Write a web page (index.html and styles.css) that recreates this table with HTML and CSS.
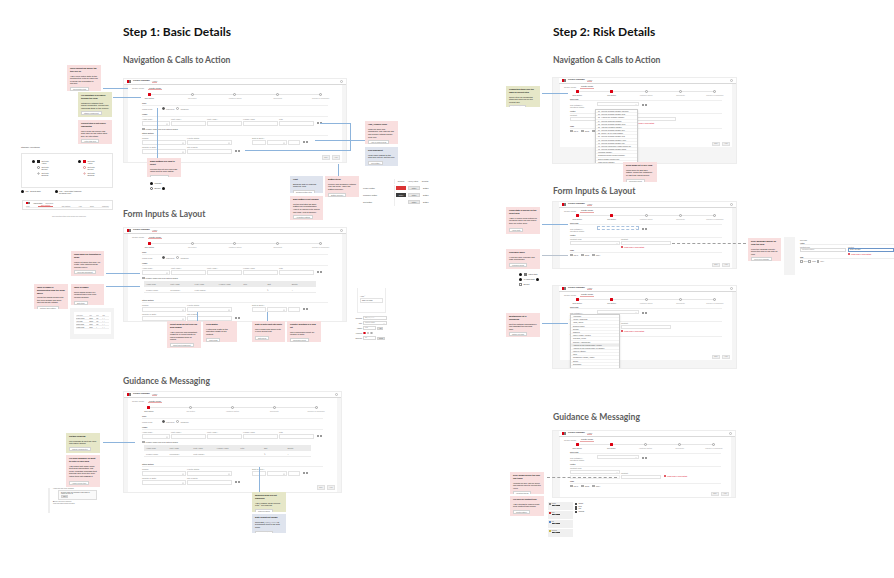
FILE: index.html
```html
<!DOCTYPE html>
<html lang="en">
<head>
<meta charset="utf-8">
<title>Profile Manager – UX review board</title>
<link rel="stylesheet" href="styles.css">
</head>
<body>
<div class="canvas">

  <!-- ===== Titles ===== -->
  <h1 class="t1 t1a">Step 1: Basic Details</h1>
  <h1 class="t1 t1b">Step 2: Risk Details</h1>
  <h2 class="t2 t2a">Navigation &amp; Calls to Action</h2>
  <h2 class="t2 t2b">Form Inputs &amp; Layout</h2>
  <h2 class="t2 t2c">Guidance &amp; Messaging</h2>
  <h2 class="t2 t2d">Navigation &amp; Calls to Action</h2>
  <h2 class="t2 t2e">Form Inputs &amp; Layout</h2>
  <h2 class="t2 t2f">Guidance &amp; Messaging</h2>

  <!-- ===== Step 1 frame: navigation ===== -->
  <div class="frame pf1">
    <div class="appbar"><i class="logo"><b></b><b></b></i><span class="appname">Profile Manager</span><span class="apptab">Home</span><i class="gear"></i></div>
    <div class="panel">
      <div class="tabs"><span>Search Profile</span><span class="on">Create Profile</span></div>
      <div class="stepper">
        <div class="step on"><i></i><span>Basic Details</span></div>
        <div class="step"><i></i><span>Risk Details</span></div>
        <div class="step"><i></i><span>Additional Details</span></div>
        <div class="step"><i></i><span>Documents</span></div>
        <div class="step"><i></i><span>Summary &amp; Submission</span></div>
      </div>
      <div class="form">
        <div class="sec">Type</div>
        <div class="row rad"><span class="w18">Profile Type</span><i class="rb on"></i><span>Individual</span><i class="rb"></i><span>Company</span></div>
        <div class="sec">Name</div>
        <div class="row">
          <div class="fld w28"><span>Name Type *</span><i class="inp sel"></i></div>
          <div class="fld w35"><span>Last Name *</span><i class="inp"></i></div>
          <div class="fld w35"><span>First Name *</span><i class="inp"></i></div>
          <div class="fld w35"><span>Middle Name</span><i class="inp"></i></div>
          <div class="fld w35"><span>Title</span><i class="inp"></i></div>
          <span class="ico"><i></i><i></i></span>
        </div>
        <div class="row chk"><i class="cb"></i><span>Primary name and alias details added</span></div>
        <div class="sec">Other details</div>
        <div class="row">
          <div class="fld w44"><span>Gender</span><i class="inp sel"></i></div>
          <div class="fld w45"><span>Marital Status</span><i class="inp sel"></i></div>
          <div class="fld w14 gapl"><span>Date of Birth *</span><i class="inp"></i></div>
          <div class="fld w20"><span>&#160;</span><i class="inp sel"></i></div>
          <div class="fld w12"><span>&#160;</span><i class="inp"></i></div>
          <span class="ico"><i></i><i></i></span>
        </div>
        <div class="row">
          <div class="fld w44"><span>Country of Birth</span><i class="inp sel"></i></div>
          <div class="fld w45"><span>City of Birth</span><i class="inp"></i></div>
          <span class="ico"><i></i><i></i></span>
        </div>
      </div>
      <div class="actions"><span class="btn">Back</span><span class="btn">Next</span></div>
    </div>
  </div>

  <!-- ===== Step 1 frame: form inputs ===== -->
  <div class="frame pf2">
    <div class="appbar"><i class="logo"><b></b><b></b></i><span class="appname">Profile Manager</span><span class="apptab">Home</span><i class="gear"></i></div>
    <div class="panel">
      <div class="tabs"><span>Search Profile</span><span class="on">Create Profile</span></div>
      <div class="stepper">
        <div class="step on"><i></i><span>Basic Details</span></div>
        <div class="step"><i></i><span>Risk Details</span></div>
        <div class="step"><i></i><span>Additional Details</span></div>
        <div class="step"><i></i><span>Documents</span></div>
        <div class="step"><i></i><span>Summary &amp; Submission</span></div>
      </div>
      <div class="form">
        <div class="sec">Type</div>
        <div class="row rad"><span class="w18">Profile Type</span><i class="rb on"></i><span>Individual</span><i class="rb"></i><span>Company</span></div>
        <div class="sec">Name</div>
        <div class="row">
          <div class="fld w28"><span>Name Type *</span><i class="inp sel"></i></div>
          <div class="fld w35"><span>Last Name *</span><i class="inp"></i></div>
          <div class="fld w35"><span>First Name *</span><i class="inp"></i></div>
          <div class="fld w35"><span>Middle Name</span><i class="inp"></i></div>
          <div class="fld w35"><span>Title</span><i class="inp"></i></div>
          <span class="ico"><i></i><i></i></span>
        </div>
        <div class="row chk"><i class="cb"></i><span>Primary name and alias details added</span></div>
        <div class="tbl">
          <div class="tr th"><span>Name Type</span><span>Last Name</span><span>First Name</span><span>Middle Name</span><span>Title</span><span>Edit</span><span>Delete</span></div>
          <div class="tr"><span>Primary name</span><span>Surname01</span><span>FirstName01</span><span></span><span></span><span>&#9998;</span><span>&#215;</span></div>
        </div>
        <div class="sec sp">Other details</div>
        <div class="row">
          <div class="fld w44"><span>Gender</span><i class="inp sel"></i></div>
          <div class="fld w45"><span>Marital Status</span><i class="inp sel"></i></div>
          <div class="fld w14 gapl"><span>Date of Birth *</span><i class="inp"></i></div>
          <div class="fld w20"><span>&#160;</span><i class="inp sel"></i></div>
          <div class="fld w12"><span>&#160;</span><i class="inp"></i></div>
          <span class="ico"><i></i><i></i></span>
        </div>
        <div class="row">
          <div class="fld w44"><span>Country of Birth</span><i class="inp sel"></i></div>
          <div class="fld w45"><span>City of Birth</span><i class="inp"></i></div>
          <span class="ico"><i></i><i></i></span>
        </div>
      </div>
    </div>
  </div>

  <!-- ===== Step 1 frame: guidance ===== -->
  <div class="frame pf3">
    <div class="appbar"><i class="logo"><b></b><b></b></i><span class="appname">Profile Manager</span><span class="apptab">Home</span><i class="gear"></i></div>
    <div class="panel">
      <div class="tabs"><span>Search Profile</span><span class="on">Create Profile</span></div>
      <div class="stepper">
        <div class="step on"><i></i><span>Basic Details</span></div>
        <div class="step"><i></i><span>Risk Details</span></div>
        <div class="step"><i></i><span>Additional Details</span></div>
        <div class="step"><i></i><span>Documents</span></div>
        <div class="step"><i></i><span>Summary &amp; Submission</span></div>
      </div>
      <div class="form">
        <div class="sec">Type</div>
        <div class="row rad"><span class="w18">Profile Type</span><i class="rb on"></i><span>Individual</span><i class="rb"></i><span>Company</span></div>
        <div class="sec">Name</div>
        <div class="row">
          <div class="fld w28"><span>Name Type *</span><i class="inp sel"></i></div>
          <div class="fld w35"><span>Last Name *</span><i class="inp"></i></div>
          <div class="fld w35"><span>First Name *</span><i class="inp"></i></div>
          <div class="fld w35"><span>Middle Name</span><i class="inp"></i></div>
          <div class="fld w35"><span>Title</span><i class="inp"></i></div>
          <span class="ico"><i></i><i></i></span>
        </div>
        <div class="row chk"><i class="cb"></i><span>Primary name and alias details added</span></div>
        <div class="tbl">
          <div class="tr th"><span>Name Type</span><span>Last Name</span><span>First Name</span><span>Middle Name</span><span>Title</span><span>Edit</span><span>Delete</span></div>
          <div class="tr"><span>Primary name</span><span>Surname01</span><span>FirstName01</span><span></span><span></span><span>&#9998;</span><span>&#215;</span></div>
        </div>
        <div class="sec sp">Other details</div>
        <div class="row">
          <div class="fld w44"><span>Gender</span><i class="inp sel"></i></div>
          <div class="fld w45"><span>Marital Status</span><i class="inp sel"></i></div>
          <div class="fld w14 gapl"><span>Date of Birth *</span><i class="inp"></i></div>
          <div class="fld w20"><span>&#160;</span><i class="inp sel"></i></div>
          <div class="fld w12"><span>&#160;</span><i class="inp"></i></div>
          <span class="ico"><i></i><i></i></span>
        </div>
        <div class="row">
          <div class="fld w44"><span>Country of Birth</span><i class="inp sel"></i></div>
          <div class="fld w45"><span>City of Birth</span><i class="inp"></i></div>
          <span class="ico"><i></i><i></i></span>
        </div>
      </div>
      <div class="actions"><span class="btn">Back</span><span class="btn">Next</span></div>
    </div>
  </div>

  <!-- ===== Step 2 frames ===== -->
  <div class="frame rf pr1">
    <div class="appbar"><i class="logo"><b></b><b></b></i><span class="appname">Profile Manager</span><span class="apptab">Home</span><i class="gear"></i></div>
    <div class="panel">
      <div class="tabs"><span>Search Profile</span><span class="on">Create Profile</span></div>
      <div class="stepper">
        <div class="step on"><i></i><span>Basic Details</span></div>
        <div class="step on"><i></i><span>Risk Details</span></div>
        <div class="step"><i></i><span>Additional Details</span></div>
        <div class="step"><i></i><span>Documents</span></div>
        <div class="step"><i></i><span>Summary &amp; Submission</span></div>
      </div>
      <div class="form">
        <div class="sec">Risk class</div>
        <div class="row"><span class="w26">Risk category *</span><i class="inp sel w42"></i><span class="ico"><i></i><i></i></span></div>
        <div class="row lone"><span>Collateral status</span></div>
        <div class="sec">Notes</div>
        <div class="fld w106"><span>Contact</span><i class="inp"></i></div>
        <div class="err e1">Please enter a valid contact</div>
        <div class="sec">Tags</div>
        <div class="row tags"><i class="cb"></i><span>2019</span><i class="cb"></i><span>2020</span><i class="cb"></i><span>2021</span></div>
      </div>
      <div class="actions"><span class="btn">Back</span><span class="btn">Next</span></div>
    </div>
    <div class="tail"></div>
    <div class="dd dd1">
      <span>01 - Low Risk Customer Category Individual</span>
      <span>02 - Low Risk Customer Category Joint</span>
      <span>03 - Medium Risk Customer Category</span>
      <span>04 - Low Risk Corporate Category</span>
      <span>05 - Low Risk Customer Category Trust</span>
      <span>06 - High Risk Customer Category</span>
      <span>07 - Low Risk Customer Category Sole</span>
      <span>08 - Charity Not-for-Profit Category</span>
      <span>09 - Low Risk Customer Category Club</span>
      <span>10 - Low Risk Customer Category Minor</span>
      <span>11 - Low Risk Customer Category PEP</span>
      <span>12 - Low Risk Partnership Multiple Owners List</span>
      <span>13 - Low Risk Customer Category Estate</span>
      <span>Prohibited Category</span>
      <span>Sanctioned Country Related Customer</span>
      <span>Special Category Related Party</span>
      <span>Under Review Category</span>
    </div>
  </div>

  <div class="frame rf pr2">
    <div class="appbar"><i class="logo"><b></b><b></b></i><span class="appname">Profile Manager</span><span class="apptab">Home</span><i class="gear"></i></div>
    <div class="panel">
      <div class="tabs"><span>Search Profile</span><span class="on">Create Profile</span></div>
      <div class="stepper">
        <div class="step on"><i></i><span>Basic Details</span></div>
        <div class="step on"><i></i><span>Risk Details</span></div>
        <div class="step"><i></i><span>Additional Details</span></div>
        <div class="step"><i></i><span>Documents</span></div>
        <div class="step"><i></i><span>Summary &amp; Submission</span></div>
      </div>
      <div class="form">
        <div class="sec">Risk class</div>
        <div class="row"><span class="w26">Risk category *</span><i class="inp sel w42 focus"></i><span class="ico"><i></i><i></i></span></div>
        <div class="row lone"><span>Collateral status</span></div>
        <div class="sec">Notes</div>
        <div class="row">
          <div class="fld w50"><span>Contact Type</span><i class="inp sel"></i></div>
          <div class="fld w50"><span>Contact</span><i class="inp"></i></div>
        </div>
        <div class="err e2"><i class="ei"></i>Please enter a valid contact</div>
        <div class="sec">Tags</div>
        <div class="row tags"><i class="cb"></i><span>2019</span><i class="cb"></i><span>2020</span><i class="cb"></i><span>2021</span></div>
      </div>
      <div class="actions"><span class="btn">Back</span><span class="btn">Next</span></div>
    </div>
  </div>

  <div class="frame rf pr3">
    <div class="appbar"><i class="logo"><b></b><b></b></i><span class="appname">Profile Manager</span><span class="apptab">Home</span><i class="gear"></i></div>
    <div class="panel">
      <div class="tabs"><span>Search Profile</span><span class="on">Create Profile</span></div>
      <div class="stepper">
        <div class="step on"><i></i><span>Basic Details</span></div>
        <div class="step on"><i></i><span>Risk Details</span></div>
        <div class="step"><i></i><span>Additional Details</span></div>
        <div class="step"><i></i><span>Documents</span></div>
        <div class="step"><i></i><span>Summary &amp; Submission</span></div>
      </div>
      <div class="form">
        <div class="sec">Risk class</div>
        <div class="row"><span class="w26">Risk category *</span><i class="inp sel w42"></i><span class="ico"><i></i><i></i></span></div>
        <div class="row lone"><span>Collateral status</span></div>
        <div class="sec">Notes</div>
        <div class="row">
          <div class="fld w50"><span>Contact Type</span><i class="inp sel"></i></div>
          <div class="fld w50"><span>Contact</span><i class="inp"></i></div>
        </div>
        <div class="err e2"><i class="ei"></i>Please enter a valid contact</div>
        <div class="sec">Tags</div>
        <div class="row tags"><i class="cb"></i><span>2019</span><i class="cb"></i><span>2020</span><i class="cb"></i><span>2021</span></div>
      </div>
      <div class="actions"><span class="btn">Back</span><span class="btn">Next</span></div>
    </div>
    <div class="dd dd2">
      <span>Accountant</span>
      <span>Adviser / Consultant</span>
      <span>Agent / Broker</span>
      <span>Business Partner</span>
      <span>Director</span>
      <span>Employee</span>
      <span>Family Member / Relative</span>
      <span>Guarantor / Surety</span>
      <span>Executor / Administrator</span>
      <span class="hl">Nominee for the account holder / trustee</span>
      <span>Nominee for the account holder, co-signatory</span>
      <span>Power of Attorney</span>
      <span>Other</span>
      <span>Relationship Manager / Officer</span>
      <span>Spouse</span>
      <span>Shareholder</span>
    </div>
  </div>

  <div class="frame rf pr4">
    <div class="appbar"><i class="logo"><b></b><b></b></i><span class="appname">Profile Manager</span><span class="apptab">Home</span><i class="gear"></i></div>
    <div class="panel">
      <div class="tabs"><span>Search Profile</span><span class="on">Create Profile</span></div>
      <div class="stepper">
        <div class="step on"><i></i><span>Basic Details</span></div>
        <div class="step on"><i></i><span>Risk Details</span></div>
        <div class="step"><i></i><span>Additional Details</span></div>
        <div class="step"><i></i><span>Documents</span></div>
        <div class="step"><i></i><span>Summary &amp; Submission</span></div>
      </div>
      <div class="form">
        <div class="sec">Risk class</div>
        <div class="row"><span class="w26">Risk category *</span><i class="inp sel w42"></i><span class="ico"><i></i><i></i></span></div>
        <div class="row lone"><span>Collateral status</span></div>
        <div class="sec">Notes</div>
        <div class="row">
          <div class="fld w50"><span>Contact Type</span><i class="inp sel"></i><i class="inp hint"></i></div>
          <div class="fld w40"><span>Contact</span><i class="inp"></i></div>
          <span class="err e3"><i class="ei"></i>Please enter a valid contact</span>
        </div>
        <div class="sec">Tags</div>
        <div class="row tags"><i class="cb"></i><span>2019</span><i class="cb"></i><span>2020</span><i class="cb"></i><span>2021</span></div>
      </div>
      <div class="actions"><span class="btn">Back</span><span class="btn">Next</span></div>
    </div>
  </div>

  <!-- ===== Annotation notes ===== -->
  <div class="note pink n1"><b>Users cannot see which tab they are on</b><p>Add a clear active state to the selected tab, with an underline in brand red so position is obvious.</p><span class="nb">Tab selected state</span></div>
  <div class="note olive n2"><b>No indication of progress through the form</b><p>Introduce a stepper that shows completed, current and upcoming steps of the journey.</p><span class="nb">Stepper component</span></div>
  <div class="note pink n3"><b>Current step is not clearly highlighted</b><p>Use a filled red marker and bold label for the active step; grey for later steps.</p><span class="nb">Active step style</span></div>
  <div class="note pink n4"><b>Radio buttons are hard to select</b><p>Increase the hit area and align labels next to each option.</p><span class="nb">Radio component</span></div>
  <div class="note pink n5"><b>Add / remove icons</b><p>Icons are small and ambiguous. Use labelled add and remove actions beside each row.</p><span class="nb">Add or remove fields</span></div>
  <div class="note blue n6"><b>Icon placement</b><p>Keep icons aligned to the field they act on, not the row.</p><span class="nb">Icon button &#8250;</span></div>
  <div class="note blue n7"><b>Next</b><p>Disabled until all required fields are valid.</p><span class="nb">Disabled button state</span></div>
  <div class="note pink n8"><b>Button styles</b><p>Primary and secondary actions look the same. Apply the button hierarchy.</p><span class="nb">Button hierarchy</span></div>
  <div class="note pink n9"><b>Back button is not needed</b><p>On the first step the Back button has no destination. Hide it or replace with Cancel and keep Next as primary.</p><span class="nb">Navigation buttons</span></div>

  <div class="note pink n10"><b>Long labels are truncated in fields</b><p>Labels sit above the field, full width, with required fields marked clearly.</p><span class="nb">Field label placement</span></div>
  <div class="note pink n11"><b>Table of names is disconnected from the fields above</b><p>Group the added names with the form section and show edit and delete actions.</p><span class="nb">Editable table pattern</span></div>
  <div class="note pink n12"><b>Table of names</b><p>Show added names in a compact table with clear column headers.</p><span class="nb">Data table</span></div>
  <div class="note pink n13"><b>Select fields do not look like drop-downs</b><p>Add a chevron and consistent height to all select inputs so users recognise them as menus.</p><span class="nb">Select input component</span></div>
  <div class="note pink n14"><b>Field widths</b><p>Match field width to the expected length of the content.</p><span class="nb">Input sizing</span></div>
  <div class="note pink n15"><b>Date of birth split into parts</b><p>Use a single date picker with a clear format hint.</p><span class="nb">Date picker</span></div>
  <div class="note pink n16"><b>Country selection is a long list</b><p>Use a searchable select for country of birth.</p><span class="nb">Searchable select</span></div>

  <div class="note olive n17"><b>Section headings</b><p>Use headings to split the form into logical groups.</p><span class="nb">Section heading style</span></div>
  <div class="note pink n18"><b>No inline guidance on what to enter in each field</b><p>Add helper text under fields that need explanation, and inline validation messages that describe how to fix the error rather than just flagging it.</p><span class="nb">Helper &amp; error text</span></div>
  <div class="note olive n19"><b>Required fields are not explained</b><p>Add a legend: fields marked with * are required.</p><span class="nb">Required legend</span></div>
  <div class="note blue n20"><b>Date format not shown</b><p>Show DD / MM / YYYY as placeholder text in the date fields.</p><span class="nb">Placeholder text</span></div>

  <div class="note olive n21"><b>Completed steps look the same as current step</b><p>Show a tick for completed steps and keep red for the current one.</p><span class="nb">Stepper states</span></div>
  <div class="note pink n22"><b>Drop-down list is very long</b><p>Users scroll to find their option. Group the categories or add type-ahead search.</p><span class="nb">Searchable select</span></div>
  <div class="note pink n23"><b>Focus state is unclear on the select field</b><p>Apply a visible focus outline so keyboard users can see where they are in the form.</p><span class="nb">Focus state</span></div>
  <div class="note pink n24"><b>Checkbox labels</b><p>Make the label clickable and align checkboxes.</p><span class="nb">Checkbox group</span></div>
  <div class="note pink n25"><b>Error messages appear far from the field</b><p>Place the message directly below the field in red with an icon.</p><span class="nb">Inline error message</span></div>
  <div class="note pink n26"><b>Relationship list is unordered</b><p>Sort the options alphabetically and highlight the hovered item.</p><span class="nb">Option list order</span></div>
  <div class="note pink n27"><b>Error shown before the user has typed</b><p>Validate on blur, not on focus, and explain how to correct the value.</p><span class="nb">Validation timing</span></div>
  <div class="note pink n28"><b>No help for contact type</b><p>Add a tooltip to explain what each contact type means.</p><span class="nb">Tooltip pattern</span></div>

  <!-- ===== Connectors ===== -->
  <i class="ln c1"></i><i class="ln c2"></i><i class="ln c3"></i><i class="ln c4"></i>
  <i class="ln c5"></i><i class="ln c6"></i><i class="ln c7"></i><i class="ln c8"></i>
  <i class="ln c9"></i><i class="ln c10"></i><i class="ln c11"></i><i class="ln c12"></i>
  <i class="ln c13"></i><i class="ln c14"></i><i class="ln c15"></i><i class="ln c16"></i>
  <i class="ln c17"></i><i class="ln c18"></i><i class="ln dash c19"></i><i class="ln dash c20"></i>

  <!-- ===== Component widgets ===== -->
  <div class="wlabel w-sv">Stepper variations</div>
  <div class="wbox w-svbox">
    <div class="vstep">
      <div class="vs"><i class="mk"></i><i class="sq"></i><span>Text Title<br>Active</span></div>
      <div class="vs"><i class="ci"></i><span>Text Title<br>Default</span></div>
      <div class="vs"><i class="ci sm"></i><span>Text Title<br>Disabled</span></div>
    </div>
    <div class="vstep red">
      <div class="vs"><i class="mk"></i><i class="sq"></i><span>Text Title<br>Active</span></div>
      <div class="vs"><i class="ci"></i><span>Text Title<br>Default</span></div>
      <div class="vs"><i class="ci sm"></i><span>Text Title<br>Disabled</span></div>
    </div>
  </div>
  <div class="legend w-lg">
    <span><i class="mk"></i>Link - Default state</span>
    <span><i class="mk"></i>Link - Hover state (underline<br>on mouse over)</span>
  </div>
  <div class="minibar w-mb">
    <div class="mbtop"><i class="logo"><b></b><b></b></i><span class="appname">Application</span><span>Document</span></div>
    <div class="mbtabs"><span>Type</span><span class="on">Basic Details</span><span>Risk Details</span><span>Add</span><span>Docs</span><span>Summary</span></div>
  </div>
  <div class="caption w-cap">Tab selected state with brand red underline</div>

  <div class="btable w-bt">
    <div class="btrow bthd"><span class="btl"></span><span>Enabled</span><span>Hover/Active</span><span>Selected</span></div>
    <div class="btrow"><span class="btl">Primary button</span><span class="bb red"></span><span class="bb gr">Button</span><span class="bt">Button</span></div>
    <div class="btrow"><span class="btl">Secondary button</span><span class="bb dk">Button</span><span class="bb gr">Button</span><span class="bt">Button</span></div>
    <div class="btrow"><span class="btl">Text button</span><span class="bb none"></span><span class="bb gr">Button</span><span class="bt">Button</span></div>
  </div>

  <div class="dotbox w-k">
    <div class="ktable">
      <div class="kr kh"><span>Name Type</span><span>Last</span><span>First</span><span>Edit</span></div>
      <div class="kr"><span>Primary name</span><span>Smith</span><span>Ann</span><span>&#9998; &#215;</span></div>
      <div class="kr"><span>Alias name</span><span>Smyth</span><span>Ann</span><span>&#9998; &#215;</span></div>
      <div class="kr"><span>Former name</span><span>Jones</span><span>Ann</span><span>&#9998; &#215;</span></div>
      <div class="kr"><span>Maiden name</span><span>Jones</span><span>A.</span><span>&#9998; &#215;</span></div>
    </div>
  </div>

  <div class="card w-p"><span>Name *</span><i class="inp pinp">Enter full name</i></div>
  <div class="formspec w-q">
    <div class="fs"><span>Start date</span><i class="inp">DD/MM/YYYY</i></div>
    <div class="fs"><span>Type</span><i class="inp sel">Select an option</i></div>
    <div class="fs"><span>Amount</span><i class="inp short">0.00</i><i class="gbtn">Add</i></div>
    <div class="fs"><span>Preferred</span><i class="rb on"></i><i class="rb"></i><i class="rb"></i></div>
    <div class="fs"><span>Reference</span><i class="inp short">Ref</i><i class="gbtn">Search</i></div>
  </div>

  <div class="guide w-g">
    <span class="gl">Helper text and inline validation</span>
    <div class="gbox"><span>&#9632; Please enter the customer's legal name as shown on their ID.</span><i class="gbtn">Got it</i></div>
    <span class="gl"><b>&#9632;</b> Error: this field is required</span>
    <span class="gl">Field hint shown below the input</span>
  </div>

  <div class="legend w-r2l">
    <span><i class="mk"></i><i class="sqg"></i>Active state</span>
    <span><i class="mk"></i>&#8594; Focus state<i class="mk"></i></span>
    <span><i class="cbx"></i>Default</span>
  </div>

  <div class="spec w-r2d">
    <div class="spin">
      <span class="sh">Risk class</span>
      <span class="sh2">Notes</span>
      <div class="srow"><div class="sf"><span>Contact Type</span><i class="inp">Telephone number</i></div><div class="sf"><span>Contact</span><i class="inp blu">01234 567 890</i></div></div>
      <span class="serr"><i class="ei"></i>Please enter a valid contact</span>
      <span class="sh2">Tags</span>
      <div class="stags"><i class="cb"></i>2019 <i class="cb"></i>2020 <i class="cb"></i>2021</div>
    </div>
  </div>

  <div class="cards w-r4">
    <div class="mc"><i class="mi"></i><div><span>Tooltip</span><i class="dbtn">OK</i></div></div>
    <div class="mc"><i class="mi r"></i><div><span>Error</span><i class="dbtn">OK</i></div></div>
    <div class="mc"><i class="mi b"></i><div><span>Info</span><i class="dbtn">OK</i></div></div>
    <div class="mc"><i class="mi y"></i><div><span>Warning</span><i class="dbtn">OK</i></div></div>
  </div>
  <div class="legend w-r4l">
    <span><i class="mk"></i>Tooltip</span>
    <span><i class="mk"></i>Error</span>
    <span><i class="mk"></i>Info</span>
    <span><i class="mk"></i>Warning</span>
  </div>
  <div class="legend w-f1l">
    <span><i class="mk"></i>Selected</span>
    <span><i class="ring"></i>Default<i class="mk"></i></span>
  </div>

</div>
</body>
</html>
```

FILE: styles.css
```css
* { box-sizing: border-box; margin: 0; padding: 0; }
html, body { background: #ffffff; }
body { margin: 0; font-family: Lato, "Liberation Sans", sans-serif; color: #222; }
i, em { font-style: normal; }

.canvas { position: relative; width: 894px; height: 578px; overflow: hidden; background: #fff; }

/* ---------- titles ---------- */
.t1 { position: absolute; font-size: 12px; font-weight: 700; line-height: 1; color: #111; white-space: nowrap; }
.t2 { position: absolute; font-size: 8.6px; font-weight: 700; line-height: 1; color: #5d5d5d; white-space: nowrap; }
.t1a { left: 123px; top: 26px; }
.t1b { left: 553px; top: 26px; }
.t2a { left: 123px; top: 55.5px; }
.t2b { left: 123px; top: 209.5px; }
.t2c { left: 123px; top: 376.5px; }
.t2d { left: 553px; top: 55.5px; }
.t2e { left: 553px; top: 186.5px; }
.t2f { left: 553px; top: 412.5px; }

/* ---------- mock frames ---------- */
.frame {
  position: absolute; background: #f5f5f5; border: 1px solid #ededed; overflow: hidden;
  display: flex; flex-direction: column; font-size: 2px; line-height: 1.2; color: #8a8a8a; white-space: nowrap;
}
.pf1 { left: 123px; top: 78px; width: 224px; height: 85px; }
.pf2 { left: 123px; top: 227px; width: 224px; height: 95px; }
.pf3 { left: 123px; top: 391px; width: 219px; height: 102px; }
.pr1 { left: 552px; top: 77px; width: 185px; height: 87px; }
.pr2 { left: 552px; top: 201px; width: 185px; height: 68px; }
.pr3 { left: 552px; top: 285px; width: 185px; height: 84px; }
.pr4 { left: 552px; top: 430px; width: 184px; height: 68px; }

.appbar {
  flex: none; height: 6px; background: #fff; border-bottom: 1px solid #d9d9d9;
  display: flex; align-items: center; gap: 2px; padding: 0 3px;
}
.logo { display: flex; width: 4px; height: 2.4px; flex: none; gap: 0.4px; }
.logo b { flex: 1; background: #db0011; }
.logo b + b { background: #7a7a7a; }
.appname { font-weight: 700; color: #333; font-size: 2.4px; }
.apptab { color: #777; border-bottom: 1px solid #eab0b0; }
.gear { margin-left: auto; width: 3.5px; height: 3.5px; border: 1px solid #bdbdbd; border-radius: 50%; }

.panel { flex: 1; margin: 0 4px; background: #fff; display: flex; flex-direction: column; padding: 1px 0 2px; min-height: 0; }
.tabs { flex: none; display: flex; gap: 3px; padding-left: 3px; height: 5px; align-items: center; color: #8d8d8d; }
.tabs span { padding: 0 1px; }
.tabs .on { color: #444; border-bottom: 1px solid #eaa9a9; }

.stepper { flex: none; display: flex; margin: 2px 0 2px; }
.step { flex: 1; position: relative; display: flex; flex-direction: column; align-items: center; gap: 1px; font-size: 1.7px; color: #a8a8a8; }
.step::before { content: ""; position: absolute; top: 1px; left: 50%; width: 100%; height: 1px; background: #e6e6e6; }
.step:last-child::before { display: none; }
.step i { position: relative; width: 3px; height: 3px; border: 1px solid #a6a6a6; background: #f3f3f3; border-radius: 50%; }
.step.on i { background: #db0011; border-color: #db0011; border-radius: 0.5px; }
.step.on span { color: #666; }

.form { display: flex; flex-direction: column; gap: 1px; padding: 0 14px 0 14px; }
.sec { font-weight: 700; color: #555; border-bottom: 1px solid #efefef; padding-bottom: 0.5px; margin-top: 1px; }
.sec.sp { margin-top: 5px; }
.row { display: flex; align-items: flex-end; gap: 1px; }
.row.rad { align-items: center; gap: 1.5px; height: 4px; }
.row.lone { height: 3px; align-items: center; }
.fld { display: flex; flex-direction: column; gap: 0.5px; flex: none; }
.inp { display: block; height: 5px; border: 1px solid #e3e3e3; background: #fff; position: relative; font-size: 1.6px; color: #999; line-height: 3px; padding-left: 1px; overflow: hidden; }
.sel::after { content: ""; position: absolute; right: 1.5px; top: 1px; width: 1px; height: 1px; border-right: 1px solid #c4c4c4; border-bottom: 1px solid #c4c4c4; transform: rotate(45deg) scale(0.6); }
.focus { border: 1px dashed #a9c2df; }
.hint { border-color: #eeeeee; height: 3.5px; }
.ico { display: flex; gap: 1px; margin-left: 2px; align-self: center; margin-top: 2px; }
.ico i { width: 2px; height: 2px; border-radius: 50%; background: #777; }
.rb { width: 3px; height: 3px; border: 1px solid #aaa; border-radius: 50%; flex: none; }
.rb.on { background: #555; border-color: #555; }
.cb { width: 2.5px; height: 2.5px; border: 1px solid #aaa; flex: none; }
.row.chk { align-items: center; gap: 1px; color: #555; margin-top: 1px; }
.row.tags { align-items: center; gap: 1px; color: #666; margin-top: 1px; }
.row.tags span { margin-right: 2px; }

.w12 { width: 12px; } .w14 { width: 14px; } .w18 { width: 18px; } .w20 { width: 20px; }
.w26 { width: 26px; flex: none; } .w28 { width: 28px; } .w35 { width: 35px; } .w40 { width: 40px; }
.w42 { width: 42px; flex: none; } .w44 { width: 44px; } .w45 { width: 45px; } .w50 { width: 50px; }
.w106 { width: 106px; }
.gapl { margin-left: 19px; }

.tbl { margin: 1px 12px 0 2px; }
.tr { display: flex; height: 5px; align-items: center; padding-left: 2px; }
.tr span { flex: 1; }
.th { background: #ebebeb; color: #777; height: 6px; }
.tr + .tr { border-bottom: 1px solid #ececec; height: 6px; }

.err { color: #d23; font-size: 1.7px; display: flex; align-items: center; gap: 1px; }
.e1 { margin-left: 64px; }
.e2 { margin-left: 51px; }
.e3 { align-self: flex-end; margin-left: 2px; margin-bottom: 2px; }
.ei { width: 2px; height: 2px; border-radius: 50%; background: #d23; }

.actions { margin-top: auto; display: flex; justify-content: flex-end; gap: 2px; padding-right: 2px; flex: none; }
.btn { width: 8px; height: 5px; border: 1px solid #e0e0e0; background: #f1f1f1; font-size: 1.6px; color: #9a9a9a; display: flex; align-items: center; justify-content: center; }

/* step 2 frame variations */
.rf .appbar { margin-left: 6px; }
.rf .panel { margin: 0 4px 0 7px; padding-bottom: 1.5px; }
.rf .tabs { height: 4px; }
.rf .stepper { margin: 1px 0 1px; }
.rf .form { padding: 0 10px 0 10px; gap: 0.5px; }
.rf .sec { margin-top: 0.5px; }
.rf .inp { height: 4px; }
.rf .row.lone { height: 2.5px; }
.rf .row.tags { margin-top: 0.5px; }
.rf .btn { height: 4px; }
.pr1 .panel { flex: none; height: 63px; }
.pr1 .tail { flex: 1; }
.pr3 .panel { flex: none; height: 68px; }

.dd { position: absolute; background: #fff; border: 1px solid #cdcdcd; display: flex; flex-direction: column; font-size: 1.6px; color: #555; overflow: hidden; box-shadow: 0 1px 2px rgba(0,0,0,0.12); }
.dd span { height: 3.2px; line-height: 3.2px; padding-left: 2px; border-bottom: 1px solid #f3f3f3; overflow: hidden; }
.dd .hl { background: #ececec; }
.dd1 { left: 42px; top: 31px; width: 43px; height: 56px; }
.dd2 { left: 17px; top: 28px; width: 50px; height: 56px; }

/* ---------- notes ---------- */
.note {
  position: absolute; padding: 2px 3px 2px; display: flex; flex-direction: column; gap: 2px;
  font-size: 2.1px; line-height: 1.25; color: #333; overflow: hidden;
}
.note b { font-weight: 700; color: #111; font-size: 2.2px; }
.note p { color: #2a2a2a; }
.note .nb { align-self: flex-start; margin-top: auto; background: #fff; border: 1px solid #d3d3d3; padding: 0 2px; font-size: 1.7px; color: #777; white-space: nowrap; }
.pink { background: #f9dfdf; }
.olive { background: #e6e7c8; }
.blue { background: #dfe4ee; }

.n1 { left: 67px; top: 65px; width: 34px; height: 26px; }
.n2 { left: 78px; top: 92px; width: 34px; height: 25px; }
.n3 { left: 78px; top: 120px; width: 34px; height: 24px; }
.n4 { left: 147px; top: 158px; width: 34px; height: 19px; }
.n5 { left: 365px; top: 121px; width: 33px; height: 23px; }
.n6 { left: 365px; top: 147px; width: 33px; height: 19px; }
.n7 { left: 290px; top: 176px; width: 33px; height: 17px; }
.n8 { left: 325px; top: 176px; width: 34px; height: 21px; }
.n9 { left: 290px; top: 196px; width: 33px; height: 24px; }
.n10 { left: 71px; top: 251px; width: 33px; height: 25px; }
.n11 { left: 34px; top: 284px; width: 34px; height: 25px; }
.n12 { left: 71px; top: 284px; width: 33px; height: 21px; }
.n13 { left: 167px; top: 321px; width: 34px; height: 27px; }
.n14 { left: 203px; top: 321px; width: 34px; height: 21px; }
.n15 { left: 252px; top: 321px; width: 33px; height: 21px; }
.n16 { left: 287px; top: 321px; width: 34px; height: 21px; }
.n17 { left: 66px; top: 433px; width: 34px; height: 20px; }
.n18 { left: 66px; top: 455px; width: 34px; height: 32px; }
.n19 { left: 252px; top: 492px; width: 34px; height: 20px; }
.n20 { left: 252px; top: 514px; width: 34px; height: 19px; }
.n21 { left: 506px; top: 86px; width: 34px; height: 21px; }
.n22 { left: 623px; top: 162px; width: 34px; height: 20px; }
.n23 { left: 506px; top: 207px; width: 34px; height: 27px; }
.n24 { left: 506px; top: 249px; width: 34px; height: 20px; }
.n25 { left: 748px; top: 238px; width: 33px; height: 23px; }
.n26 { left: 506px; top: 313px; width: 34px; height: 24px; }
.n27 { left: 510px; top: 472px; width: 34px; height: 22px; }
.n28 { left: 510px; top: 496px; width: 34px; height: 20px; }

/* ---------- connectors ---------- */
.ln { position: absolute; background: #8db4dc; }
.ln.dash { background: none; border-top: 1px dashed #a0a0a0; }
.c1 { left: 103px; top: 88px; width: 25px; height: 1px; }
.c2 { left: 113px; top: 97px; width: 28px; height: 1px; }
.c3 { left: 157px; top: 108px; width: 1px; height: 50px; }
.c4 { left: 315px; top: 140px; width: 50px; height: 1px; }
.c5 { left: 320px; top: 123px; width: 31px; height: 1px; }
.c6 { left: 350px; top: 123px; width: 1px; height: 28px; }
.c7 { left: 245px; top: 150px; width: 106px; height: 1px; }
.c8 { left: 338px; top: 164px; width: 1px; height: 12px; }
.c9 { left: 106px; top: 273px; width: 34px; height: 1px; }
.c10 { left: 106px; top: 286px; width: 34px; height: 1px; }
.c11 { left: 197px; top: 312px; width: 1px; height: 9px; }
.c12 { left: 267px; top: 312px; width: 1px; height: 9px; }
.c13 { left: 103px; top: 442px; width: 32px; height: 1px; }
.c14 { left: 259px; top: 467px; width: 1px; height: 25px; }
.c15 { left: 542px; top: 93px; width: 26px; height: 1px; }
.c16 { left: 542px; top: 224px; width: 26px; height: 1px; }
.c17 { left: 542px; top: 255px; width: 26px; height: 1px; background: #b9c3cf; }
.c18 { left: 542px; top: 323px; width: 26px; height: 1px; }
.c19 { left: 672px; top: 243px; width: 74px; height: 0; }
.c20 { left: 547px; top: 477px; width: 70px; height: 0; }

/* ---------- widgets ---------- */
.wlabel { position: absolute; font-size: 2.4px; color: #555; white-space: nowrap; }
.w-sv { left: 21px; top: 146px; }
.wbox { position: absolute; border: 1px solid #e6e6e6; background: #fff; display: flex; gap: 20px; padding: 6px 0 0 10px; }
.w-svbox { left: 21px; top: 153px; width: 92px; height: 35px; }
.vstep { display: flex; flex-direction: column; gap: 2px; width: 26px; font-size: 1.8px; color: #555; line-height: 1.15; }
.vs { display: flex; align-items: flex-start; gap: 1.5px; position: relative; padding-left: 5px; }
.vs .mk { position: absolute; left: 0; top: 0; }
.vs .sq { width: 3px; height: 3px; background: #222; flex: none; }
.vstep.red .sq { background: #db0011; }
.vs .ci { width: 3px; height: 3px; border: 1px solid #888; border-radius: 50%; flex: none; }
.vstep.red .ci { border-color: #d88; }
.vs .ci.sm { transform: scale(0.7); }
.mk { display: inline-block; width: 3px; height: 3px; border-radius: 50%; background: #111; flex: none; }
.ring { display: inline-block; width: 3px; height: 3px; border-radius: 50%; border: 1px solid #555; flex: none; }

.legend { position: absolute; display: flex; font-size: 1.8px; color: #444; line-height: 1.2; white-space: nowrap; }
.legend span { display: flex; align-items: flex-start; gap: 1.5px; }
.w-lg { left: 21px; top: 190px; gap: 14px; }
.w-r2l { left: 519px; top: 273px; flex-direction: column; gap: 2px; }
.w-r4l { left: 575px; top: 503px; flex-direction: column; gap: 0.6px; font-size: 1.5px; }
.w-r4l .mk { width: 2px; height: 2px; }
.w-f1l { left: 150px; top: 182px; flex-direction: column; gap: 2px; }
.sqg { width: 3px; height: 3px; background: #777; }
.cbx { width: 3px; height: 3px; border: 1px solid #888; }

.minibar { position: absolute; background: #fff; border: 1px solid #e3e3e3; display: flex; flex-direction: column; font-size: 1.7px; color: #888; padding: 1px 3px; }
.w-mb { left: 22px; top: 200px; width: 91px; height: 10px; }
.mbtop { display: flex; align-items: center; gap: 3px; height: 4px; }
.mbtop .appname { font-size: 1.9px; font-weight: 400; color: #555; }
.mbtabs { display: flex; justify-content: space-between; height: 4px; align-items: center; border-bottom: 1px solid #eee; }
.mbtabs .on { border-bottom: 1px solid #e06b6b; color: #d55; padding: 0 3px; }
.caption { position: absolute; font-size: 1.8px; color: #999; white-space: nowrap; }
.w-cap { left: 52px; top: 215px; }

.btable { position: absolute; display: flex; flex-direction: column; gap: 3px; font-size: 1.8px; color: #555; }
.w-bt { left: 363px; top: 179px; width: 72px; }
.btrow { display: flex; align-items: center; height: 4px; }
.btrow > span { flex: none; }
.btl { width: 32px; border-right: 1px solid #eee; height: 7px; line-height: 7px; }
.bthd .btl { height: 5px; }
.bthd span:not(.btl) { width: 12px; text-align: center; }
.bb { width: 10px; height: 4px; margin: 0 1px; display: flex; align-items: center; justify-content: center; font-size: 1.5px; }
.bb.red { background: #db3434; }
.bb.dk { background: #3b3b3b; color: #ddd; }
.bb.gr { background: #e8e8e8; border: 1px solid #d5d5d5; color: #666; width: 12px; }
.bb.none { background: transparent; }
.bt { margin-left: 2px; }

.dotbox { position: absolute; background-color: #f3f3f3; background-image: radial-gradient(#dedede 0.5px, transparent 0.6px); background-size: 2px 2px; padding: 4px 3px 5px 4px; }
.w-k { left: 70px; top: 308px; width: 44px; height: 31px; }
.ktable { background: #fff; height: 100%; padding: 3px 2px; display: flex; flex-direction: column; gap: 0.6px; font-size: 1.4px; color: #555; }
.kr { display: flex; height: 2.4px; align-items: center; border-bottom: 1px solid #f0f0f0; }
.kr span { flex: 1; white-space: nowrap; overflow: hidden; }
.kr span:first-child { flex: 2; }
.kh { color: #888; }

.card { position: absolute; background: #fff; border: 1px solid #ededed; border-top: 0; display: flex; flex-direction: column; gap: 1px; padding: 7px 2px 0 2px; font-size: 1.6px; color: #777; }
.w-p { left: 357px; top: 288px; width: 29px; height: 25px; }
.pinp { height: 5px; color: #555; }

.formspec { position: absolute; display: flex; flex-direction: column; gap: 0.8px; font-size: 1.5px; color: #555; }
.w-q { left: 352px; top: 316px; width: 35px; }
.fs { display: flex; align-items: center; gap: 1px; height: 4.2px; }
.fs > span { width: 10px; text-align: right; flex: none; white-space: nowrap; }
.fs .inp { flex: 1; height: 4px; line-height: 2px; font-size: 1.4px; border-color: #d8d8d8; }
.fs .inp.short { flex: none; width: 13px; }
.fs .rb { width: 2.5px; height: 2.5px; }
.fs .rb.on { background: #db0011; border-color: #db0011; }
.gbtn { background: #e6e6e6; border: 1px solid #d2d2d2; font-size: 1.4px; padding: 0 1px; color: #555; }

.guide { position: absolute; display: flex; flex-direction: column; gap: 1px; font-size: 1.5px; color: #777; border-left: 2px solid #eee; padding-left: 3px; }
.w-g { left: 48px; top: 488px; width: 49px; height: 25px; }
.gl { white-space: nowrap; }
.gl b { color: #222; }
.gbox { border: 1px solid #ddd; background: #fafafa; padding: 1px 2px; display: flex; flex-direction: column; gap: 1px; white-space: normal; color: #555; margin-left: 5px; }
.gbox .gbtn { align-self: flex-start; }

.spec { position: absolute; background-color: #f3f3f3; background-image: radial-gradient(#dedede 0.5px, transparent 0.6px); background-size: 2px 2px; padding: 0 0 0 11px; }
.w-r2d { left: 784px; top: 237px; width: 110px; height: 38px; }
.spin { background: #fff; height: 100%; padding: 2px 0 0 5px; display: flex; flex-direction: column; gap: 1px; font-size: 1.7px; color: #777; white-space: nowrap; }
.sh { color: #666; }
.sh2 { font-weight: 700; color: #444; border-bottom: 1px solid #eee; }
.srow { display: flex; gap: 2px; }
.sf { display: flex; flex-direction: column; width: 46px; }
.sf .inp { height: 4px; line-height: 2px; font-size: 1.5px; border-color: #dcdcdc; }
.sf .inp.blu { border-color: #6b95c9; color: #555; }
.serr { color: #d23; display: flex; align-items: center; gap: 1px; margin-left: 48px; }
.stags { display: flex; align-items: center; gap: 1px; }

.cards { position: absolute; display: flex; flex-direction: column; gap: 1.5px; }
.w-r4 { left: 548px; top: 502px; width: 25px; }
.mc { background: #f0f0f0; height: 7.5px; display: flex; gap: 1px; padding: 1px; font-size: 1.4px; color: #666; }
.mc > div { display: flex; flex-direction: column; gap: 0.5px; white-space: nowrap; }
.mi { width: 1.5px; height: 1.5px; background: #888; flex: none; }
.mi.r { background: #c33; } .mi.b { background: #58c; } .mi.y { background: #cb4; }
.dbtn { background: #444; color: #ddd; width: 8px; font-size: 1.3px; text-align: center; }
```
